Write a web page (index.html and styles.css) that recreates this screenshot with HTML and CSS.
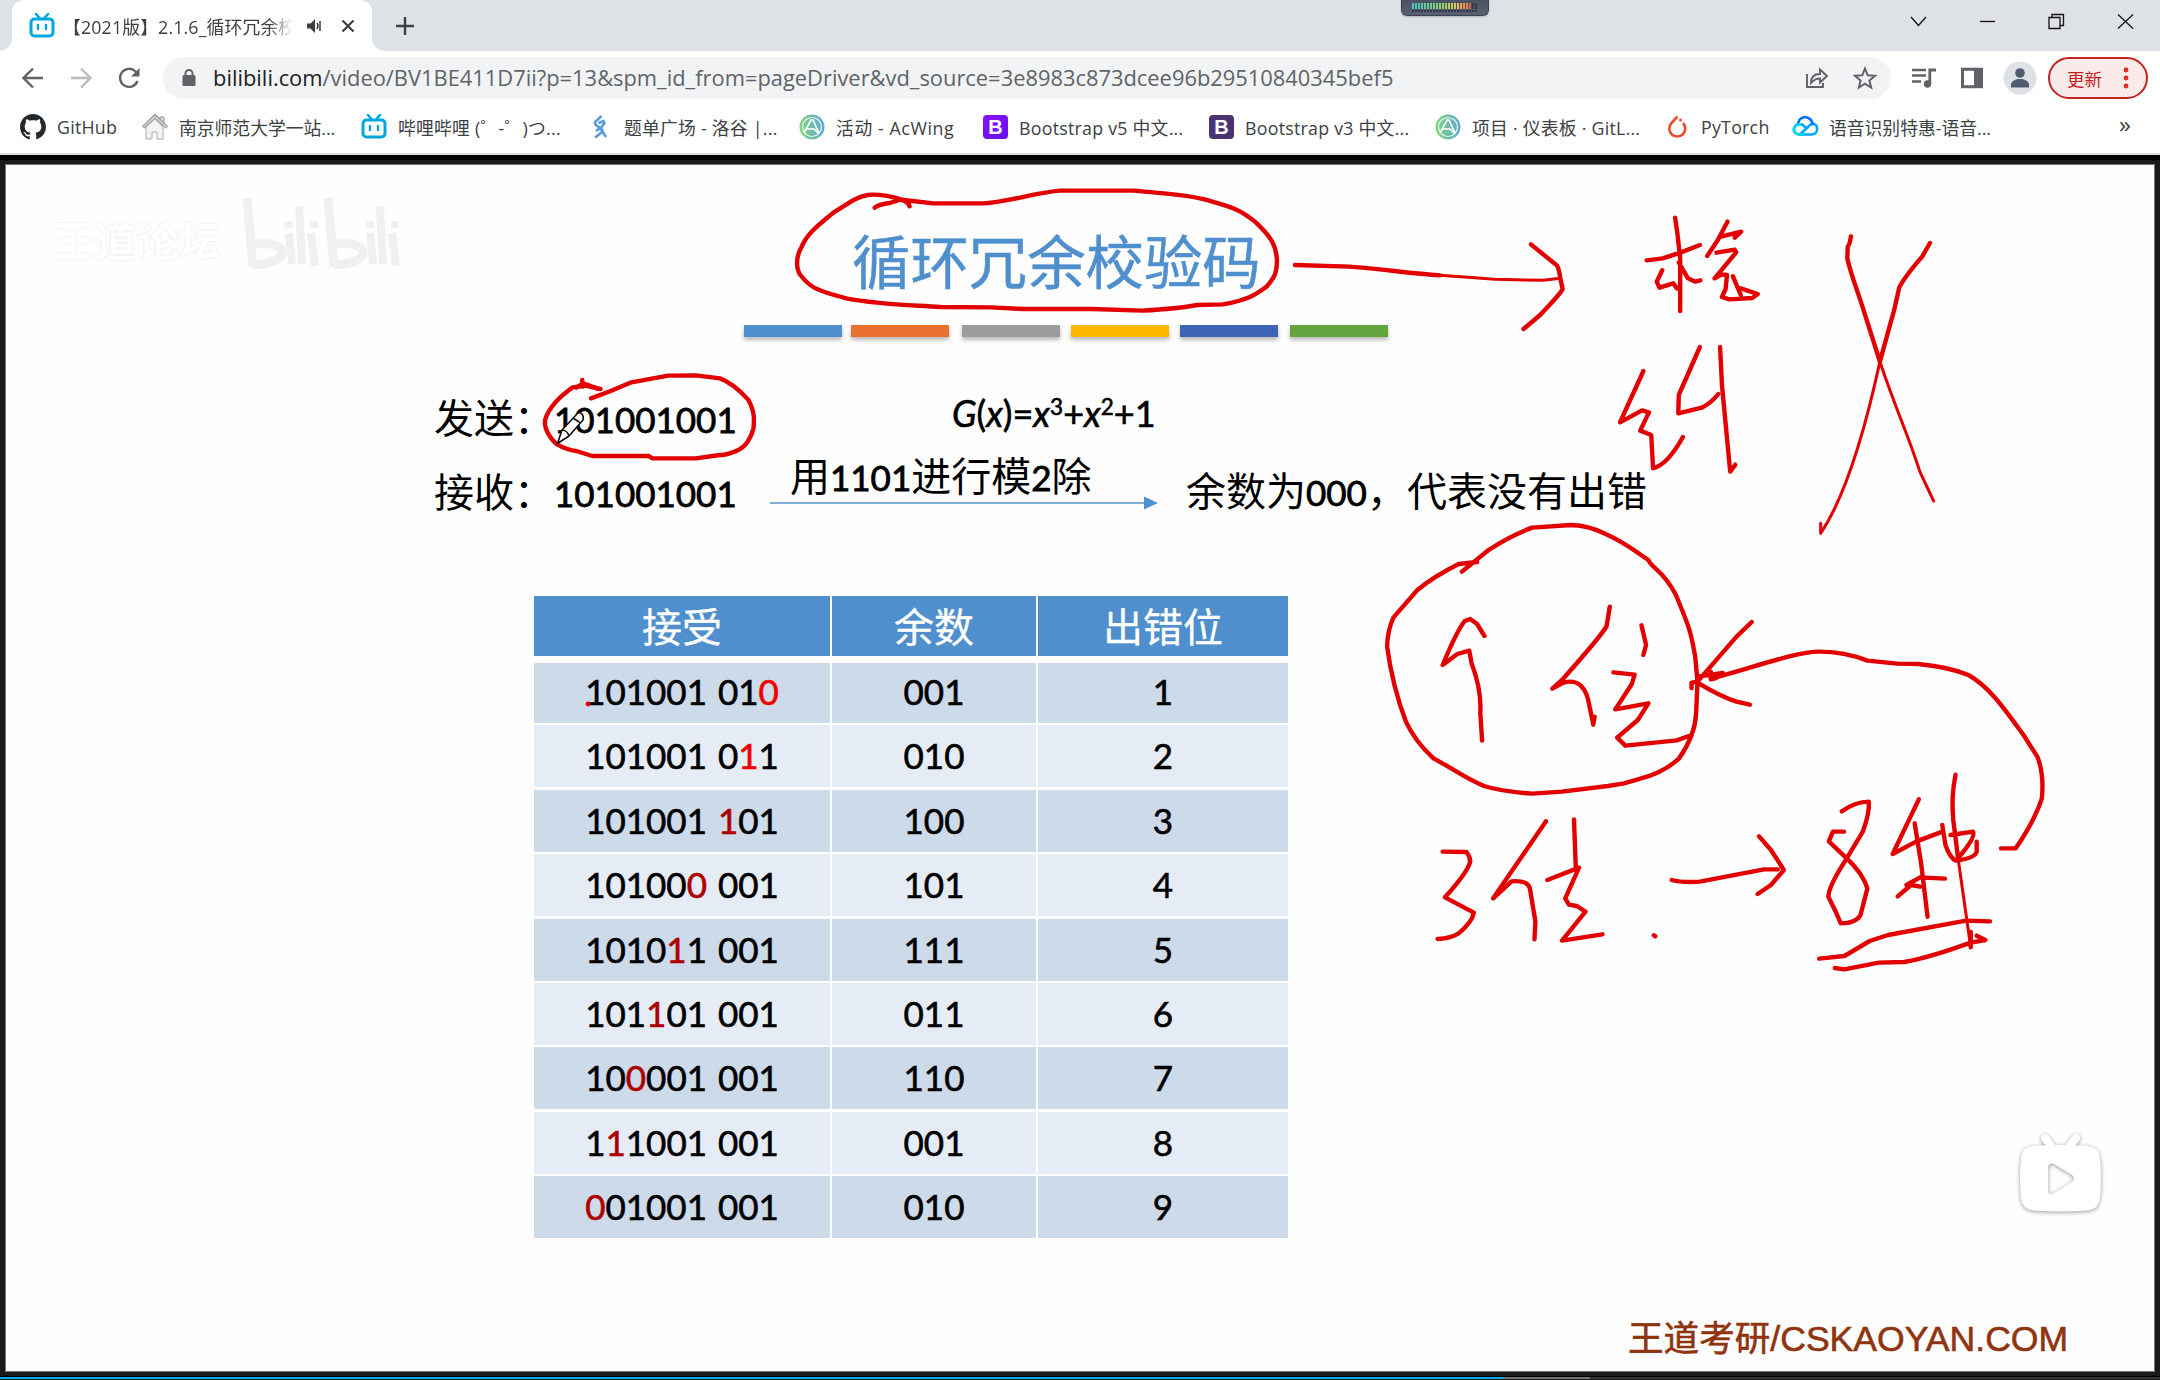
FILE: index.html
```html
<!DOCTYPE html>
<html lang="zh-CN">
<head>
<meta charset="utf-8">
<title>循环冗余校验码</title>
<link rel="stylesheet" href="styles.css">
</head>
<body>
<svg class="defs" width="0" height="0">
  <symbol id="bili" viewBox="0 0 26 26"><path d="M7 1l3.500 4M19 1l-3.500 4" stroke="#00a6de" stroke-width="2.600" stroke-linecap="round"/><rect x="2" y="6" width="22" height="17" rx="3.500" fill="#fff" stroke="#00a6de" stroke-width="3"/><path d="M9 12v4M17 12v4" stroke="#00a6de" stroke-width="2.400" stroke-linecap="round"/></symbol>
  <symbol id="acwing" viewBox="0 0 26 26"><defs><linearGradient id="ag"><stop offset="0" stop-color="#7fd67a"/><stop offset="1" stop-color="#62a6d8"/></linearGradient></defs><circle cx="13" cy="13" r="12.500" fill="url(#ag)"/><circle cx="13" cy="13" r="9.500" fill="none" stroke="#e6f6f0" stroke-width="1.200"/><path d="M5 19L12 6h2l6 13M8 15h7l4 4" fill="none" stroke="#fff" stroke-width="1.700"/></symbol>
</svg>

<header class="tabstrip">
  <div class="tab">
    <svg class="favicon" width="26" height="26"><use href="#bili"/></svg>
    <span class="tab-title">【2021版】2.1.6_循环冗余校</span>
    <svg class="sound" width="16" height="14" viewBox="0 0 16 14"><path d="M0 4.500h3.500L8 0v14L3.500 9.500H0z" fill="#3c4043"/><path d="M10 4q2 3 0 6M13 2v10" fill="none" stroke="#3c4043" stroke-width="1.500"/></svg>
    <svg class="tab-close" width="14" height="14" viewBox="0 0 14 14"><path d="M1.500 1.500l11 11M12.500 1.500l-11 11" stroke="#3c4043" stroke-width="2.200"/></svg>
  </div>
  <svg class="newtab" width="20" height="20" viewBox="0 0 20 20"><path d="M10 1v18M1 10h18" stroke="#3c4043" stroke-width="2.400"/></svg>
  <div class="meter"><i></i><b></b></div>
  <div class="winctl">
    <svg width="17" height="17" viewBox="0 0 17 17"><path d="M1 4l7.500 8.500L16 4"/></svg>
    <svg width="17" height="17" viewBox="0 0 17 17"><path d="M1 8.500h15"/></svg>
    <svg width="17" height="17" viewBox="0 0 17 17"><path d="M1 4.500h11v11H1zM4 4.500v-3h11.500v11H12.500"/></svg>
    <svg width="17" height="17" viewBox="0 0 17 17"><path d="M1 1.500l15 14M16 1.500L1 15.500"/></svg>
  </div>
</header>

<nav class="toolbar">
  <svg class="nav" width="24" height="24" viewBox="0 0 24 24"><path d="M22 12H3M12 2.500L2.500 12l9.500 9.500" stroke="#5f6368"/></svg>
  <svg class="nav" width="24" height="24" viewBox="0 0 24 24"><path d="M2 12h19M12 2.500l9.500 9.500-9.500 9.500" stroke="#babcbe"/></svg>
  <svg class="nav" width="24" height="24" viewBox="0 0 24 24"><path d="M20.500 15a9 9 0 1 1-2-9.500L21 8" stroke="#5f6368"/><path d="M22.500 2v8.500H14z" fill="#5f6368"/></svg>
  <div class="omnibox">
    <svg class="lock" width="14" height="18" viewBox="0 0 14 18"><rect x="0.500" y="6" width="13" height="11" rx="1.500" fill="#5f6368"/><path d="M3.500 7V4.500a3.500 3.500 0 0 1 7 0V7" fill="none" stroke="#5f6368" stroke-width="2"/></svg>
    <span class="url"><em>bilibili.com</em>/video/BV1BE411D7ii?p=13&amp;spm_id_from=pageDriver&amp;vd_source=3e8983c873dcee96b29510840345bef5</span>
    <svg class="share" width="24" height="24" viewBox="0 0 24 24"><path d="M2 8v13h16v-4M6 17c0-6 3-9 9-9V3.500l7 6.500-7 6.500V12.500c-4 0-6 1-9 4.500z" fill="none" stroke="#5f6368" stroke-width="1.900"/></svg>
    <svg class="star" width="24" height="24" viewBox="0 0 24 24"><path d="M12 2.500l2.700 6.800 7.300.5-5.600 4.700 1.800 7.100L12 17.700l-6.200 3.900 1.800-7.100L2 9.800l7.300-.5z" fill="none" stroke="#5f6368" stroke-width="2"/></svg>
  </div>
  <svg class="music" width="26" height="24" viewBox="0 0 26 24"><path d="M1 4h14M1 9.500h14M1 15.500h9" stroke="#5f6368" stroke-width="2.400"/><path d="M18.800 18V4H25" fill="none" stroke="#5f6368" stroke-width="2.800"/><circle cx="16.500" cy="18" r="3.700" fill="#5f6368"/></svg>
  <svg class="panel" width="22" height="22" viewBox="0 0 22 22"><path d="M1.500 2.200h19v17.600h-19z" fill="none" stroke="#5f6368" stroke-width="3"/><path d="M13 1h8v20h-8z" fill="#5f6368"/></svg>
  <svg class="avatar" width="34" height="34" viewBox="0 0 34 34"><circle cx="17" cy="17" r="16.500" fill="#dee1e6"/><circle cx="17" cy="12" r="4.800" fill="#525c70"/><path d="M8 26.500v-3c0-3.500 5-5.500 9-5.500s9 2 9 5.500v3z" fill="#525c70"/></svg>
  <button class="update">更新<svg width="6" height="24" viewBox="0 0 6 24"><circle cx="3" cy="4" r="2.400"/><circle cx="3" cy="12" r="2.400"/><circle cx="3" cy="20" r="2.400"/></svg></button>
</nav>

<nav class="bookmarks">
  <a class="bm w1"><svg width="26" height="26" viewBox="0 0 16 16"><path fill="#24292e" d="M8 0C3.580 0 0 3.580 0 8c0 3.540 2.290 6.530 5.470 7.590.4.070.55-.17.55-.38 0-.19-.01-.82-.01-1.490-2.010.37-2.530-.49-2.690-.94-.09-.23-.48-.94-.82-1.130-.28-.15-.68-.52-.01-.53.63-.01 1.080.58 1.230.82.720 1.210 1.870.87 2.330.66.070-.52.280-.87.510-1.070-1.780-.2-3.640-.89-3.640-3.950 0-.87.310-1.590.82-2.150-.08-.2-.36-1.020.08-2.120 0 0 .67-.21 2.200.82.640-.18 1.320-.27 2-.27s1.360.09 2 .27c1.530-1.040 2.200-.82 2.200-.82.440 1.100.16 1.920.08 2.120.51.560.82 1.270.82 2.150 0 3.070-1.870 3.750-3.650 3.950.29.25.54.73.54 1.480 0 1.070-.01 1.930-.01 2.200 0 .21.15.46.55.38A8.010 8.010 0 0 0 16 8c0-4.420-3.580-8-8-8z"/></svg><span>GitHub</span></a>
  <a class="bm w2"><svg width="26" height="26" viewBox="0 0 26 26"><path d="M18 3h4v7h-4z" fill="#ddd" stroke="#999"/><path d="M4 13v12h6v-7h5v7h6V13l-8-8z" fill="#f3f3f3" stroke="#aaa"/><path d="M1 13.500L13 2l12 11.500" fill="none" stroke="#999" stroke-width="3.500"/><path d="M1.500 13L13 2.500 24.500 13" fill="none" stroke="#d6d6d6" stroke-width="1.600"/></svg><span>南京师范大学一站...</span></a>
  <a class="bm w3"><svg width="26" height="26"><use href="#bili"/></svg><span>哔哩哔哩 (゜-゜)つ...</span></a>
  <a class="bm w4"><svg width="26" height="26" viewBox="0 0 26 26"><path d="M14.500 2L8.500 7.500q-1.500 2 1 4l5 3.500q2 1.500 0 3.500l-6.500 5M11.500 9l5-2 1 2-3 4-5.500 4M13 14l6 9" fill="none" stroke="#559be0" stroke-width="2.500"/></svg><span>题单广场 - 洛谷 |...</span></a>
  <a class="bm w5"><svg width="26" height="26"><use href="#acwing"/></svg><span>活动 - AcWing</span></a>
  <a class="bm w6"><i class="boot five">B</i><span>Bootstrap v5 中文...</span></a>
  <a class="bm w7"><i class="boot three">B</i><span>Bootstrap v3 中文...</span></a>
  <a class="bm w8"><svg width="26" height="26"><use href="#acwing"/></svg><span>项目 · 仪表板 · GitL...</span></a>
  <a class="bm w9"><svg width="26" height="26" viewBox="0 0 26 26"><path d="M13.500 2.500L7.500 9a8 8 0 1 0 11.500 0" fill="none" stroke="#ee4c2c" stroke-width="2.600"/><circle cx="16.500" cy="6" r="1.500" fill="#ee4c2c"/></svg><span>PyTorch</span></a>
  <a class="bm w10"><svg width="26" height="26" viewBox="0 0 26 26"><path d="M8 20.500L18 11q5-3 7 2 1 7-5 7.500H7q-6-1-5-6 2-6 8-4l5 4" fill="none" stroke="#00a3ff" stroke-width="2.600"/><path d="M6 11q0-7 7-8 7 1 8 8" fill="none" stroke="#006eff" stroke-width="2.600"/><path d="M12 20.500H7q-6-1-5-6 2-5 7-4" fill="none" stroke="#00d8e8" stroke-width="2.600"/></svg><span>语音识别特惠-语音...</span></a>
  <span class="more">»</span>
</nav>

<main class="player">
  <section class="slide">
    <h1>循环冗余校验码</h1>
    <div class="stripes"><i></i><i></i><i></i><i></i><i></i><i></i></div>
    <div class="problem">
      <div class="given"><p>发送：<span class="num">101001001</span></p><p>接收：<span class="num">101001001</span></p></div>
      <div class="method">
        <p class="poly"><em>G</em>(<em>x</em>)=<em>x</em><sup>3</sup>+<em>x</em><sup>2</sup>+1</p>
        <p class="mod">用<span class="num">1101</span>进行模<span class="num">2</span>除</p>
        <svg class="arrow" width="388" height="14" viewBox="0 0 388 14"><path d="M0 7h376" stroke="#5593cd" stroke-width="1.600"/><path d="M374 0.500L388 7l-14 6.500z" fill="#4f8fcd"/></svg>
      </div>
      <p class="result">余数为<span class="num">000</span>，代表没有出错</p>
    </div>
    <div class="table">
      <div class="row head"><span>接受</span><span>余数</span><span>出错位</span></div>
      <div class="row first"><span>101001 01<b class="hot">0</b></span><span>001</span><span>1</span></div>
      <div class="row"><span>101001 0<b class="hot">1</b>1</span><span>010</span><span>2</span></div>
      <div class="row"><span>101001 <b>1</b>01</span><span>100</span><span>3</span></div>
      <div class="row"><span>10100<b>0</b> 001</span><span>101</span><span>4</span></div>
      <div class="row"><span>1010<b>1</b>1 001</span><span>111</span><span>5</span></div>
      <div class="row"><span>101<b>1</b>01 001</span><span>011</span><span>6</span></div>
      <div class="row"><span>10<b>0</b>001 001</span><span>110</span><span>7</span></div>
      <div class="row"><span>1<b>1</b>1001 001</span><span>001</span><span>8</span></div>
      <div class="row"><span><b>0</b>01001 001</span><span>010</span><span>9</span></div>
    </div>
    <footer class="brand">王道考研/CSKAOYAN.COM</footer>
  </section>
  <div class="progress"></div>
</main>

<div class="watermark">
  <span>王道论坛</span>
  <svg width="160" height="74" viewBox="0 0 160 74"><g id="bl" fill="none" stroke="#f0f0f0" stroke-width="8"><path d="M5 1L11 70M11 47Q40 44 40 57Q38 66 11 68" stroke-width="9"/><path d="M47 36l3 31M57 9l3 58M69 36l4 33M46 24l1 7M72 24l0 7"/></g><use href="#bl" x="81"/></svg>
</div>

<svg class="ink" width="2160" height="1380" viewBox="0 0 2160 1380">
  <g transform="translate(720 165) scale(.45918 .33333)">
    <path d="M337 128Q345 118 370 114L392 104Q408 108 413 124M400 105Q350 85 322 90C300 95 290 105 245 145C215 180 190 205 178 245C165 275 165 310 175 330C195 365 205 375 275 400C350 420 420 420 480 426L590 427L660 432L810 432L920 437C980 432 1000 430 1040 420L1095 418C1150 405 1165 390 1190 365C1210 335 1212 320 1213 290C1212 240 1200 215 1165 170C1130 130 1110 125 1055 103C1000 85 960 85 900 77L740 77C680 85 630 110 575 115L465 115L400 105"/>
    <path d="M1252 300L1370 305C1450 313 1500 325 1568 331"/>
  </g>
  <g transform="translate(0 165) scale(.45918 .33333)">
    <path d="M1287 700L1330 678L1375 652L1455 632L1515 631L1568 640C1598 655 1620 690 1630 705C1643 740 1643 760 1641 790C1636 820 1623 845 1608 855C1593 865 1578 870 1568 870L1515 880L1420 880L1413 873L1290 873L1255 858Q1235 855 1213 838C1190 810 1185 780 1187 765C1195 725 1220 695 1247 667L1275 662L1308 672M1268 645L1268 665"/>
    <path d="M1255 668L1270 655L1300 670"/>
  </g>
  <g transform="translate(1440 165) scale(.45918 .33333)">
    <path class="thin" d="M0 331L120 343L225 346L262 340"/>
    <path d="M198 238L255 302Q260 315 262 340L267 372Q265 380 245 410L218 450L182 492"/>
    <path d="M512 158L517 205L523 280V438M450 286L485 280L525 262L566 240M484 316L472 350L478 368L508 355L516 370M520 292L540 340L556 350L567 346M626 170L605 225L582 273M612 215L656 200L642 218M602 263L642 254L645 262L598 340L614 328L625 330L622 372L614 396L630 403L680 399L692 387L655 370M638 334L655 390"/>
    <path d="M443 618L392 772L440 736L455 742L436 797L460 810L464 910Q495 900 529 816M566 546L520 690L519 745L570 728Q590 715 606 687M610 546L614 660L632 920L643 899"/>
    <path d="M895 214Q892 240 888 245L887 280C895 330 905 360 920 425L958 590M1067 234L1050 275Q1012 335 1000 368L990 430L958 590"/>
    <path class="thin" d="M958 590C1000 760 1020 810 1045 920L1075 1008M958 590C925 800 880 1000 829 1105L829 1075"/>
  </g>
  <g transform="translate(1360 500) scale(.45918 .33333)">
    <path d="M222 215L280 150Q330 105 375 83L460 75Q500 77 535 102C580 130 590 145 628 180C635 205 660 210 688 285C715 375 720 390 730 470L735 545L732 640Q730 705 695 775Q660 820 605 838L575 850L540 858L440 875L375 881Q310 875 270 858C230 835 220 820 160 775Q120 725 100 665C75 575 65 500 59 440Q60 390 73 352L125 270Q160 230 215 192L255 186"/>
    <path d="M271 408L255 372L240 357L228 363Q210 395 180 495L212 462L238 452L243 490Q265 570 262 640L266 722M544 320L537 378Q530 400 440 540L419 566L443 548Q490 530 500 620L508 674L511 650M613 376L623 435L617 465M552 517L598 524L592 552L556 628L628 610L605 660L560 713L578 737L690 721L716 708"/>
    <path d="M853 366L820 410L735 545L722 548V564M849 614L820 605Q785 590 735 548M735 530L790 519Q780 535 764 538V515M785 528C850 505 950 455 1000 455Q1055 455 1105 482L1170 491L1215 492Q1280 500 1325 525C1370 560 1400 620 1445 705L1475 770Q1490 820 1485 895Q1470 960 1428 1045H1396"/>
    <path d="M180 1055L232 1056Q240 1070 240 1085Q235 1115 185 1192L248 1238Q245 1265 215 1300Q200 1315 169 1317M405 964L290 1195L330 1144Q365 1140 370 1165L382 1265L380 1318M466 958L470 1105M408 1140L477 1103L447 1195L455 1214L472 1218L491 1235L440 1322L528 1303M640 1306L643 1309"/>
    <path d="M679 1140Q700 1148 740 1145L880 1108H910M869 1009L895 1050L923 1110L895 1155L866 1182"/>
    <path d="M1049 934Q1080 905 1108 905Q1110 940 1095 995L1060 1075Q1020 1160 1020 1190L1035 1232L1047 1270Q1080 1270 1090 1245L1105 1165Q1095 1120 1060 1075L1021 1024L1030 995H1054"/>
    <path d="M1217 898L1160 1062L1212 1024L1270 994M1208 970L1222 1090L1236 1250M1171 1189L1200 1155L1220 1160M1190 1155L1220 1132L1274 1136M1268 975L1275 1035Q1285 1075 1298 1082Q1340 1075 1343 1055V1025M1286 1005L1335 995Q1342 1010 1304 1072M1297 824Q1287 890 1292 960L1303 1080"/>
    <path class="thin" d="M1303 1080L1330 1342"/>
    <path d="M1000 1376L1055 1368L1110 1323L1150 1305L1320 1262L1372 1264M1034 1404L1055 1408L1130 1388L1185 1386Q1235 1375 1330 1328L1362 1320L1343 1307M1330 1296V1342"/>
  </g>
  <circle class="dot" cx="588" cy="704" r="2.400" />
  <path class="pen" d="M557.500 443.500l4.500-13.500 15-16q3-2.500 5 0t1 6l-14 16zM573 418l6 4M562 430q5 0 7 6"/>
</svg>

<svg class="float" width="110" height="110" viewBox="0 0 110 110"><path d="M40 18l9 12M71 18l-9 12" stroke="#fff" stroke-width="8" stroke-linecap="round"/><path d="M28 26Q55.500 24 83 26Q94 27 95 38Q97 58 95 78Q94 89 83 90.500Q55.500 92.500 28 90.500Q17 89 16 78Q14 58 16 38Q17 27 28 26zM43 49V69Q43 76 49 73L67 62Q71 59 67 55L49 44Q43 42 43 49z" fill="#fff" fill-rule="evenodd"/></svg>
</body>
</html>
```
FILE: styles.css
```css
* { box-sizing: border-box; }
body {
  margin: 0;
  width: 2160px;
  height: 1380px;
  overflow: hidden;
  display: flex;
  flex-direction: column;
  background: #fff;
  font-family: "Open Sans", "Noto Sans CJK SC", sans-serif;
  color: #3c4043;
}
svg { display: block; flex: none; overflow: visible; }
p, h1 { margin: 0; font-weight: 400; }
em, i { font-style: normal; }
.defs { position: absolute; }

/* window frame and tabs */
.tabstrip { height: 51px; background: #dee1e6; display: flex; align-items: flex-start; }
.tab {
  width: 360px; height: 51px; margin-left: 12px; padding: 0 17px;
  display: flex; align-items: center;
  background: #fff; border-radius: 12px 12px 0 0; position: relative;
}
.tab::before, .tab::after {
  content: ""; position: absolute; bottom: 0; width: 12px; height: 12px;
}
.tab::before { left: -12px; background: radial-gradient(circle at 0 0, transparent 11.5px, #fff 12px); }
.tab::after { right: -12px; background: radial-gradient(circle at 100% 0, transparent 11.5px, #fff 12px); }
.tab-title {
  width: 232px; margin-left: 8px; overflow: hidden; white-space: nowrap;
  font-size: 17.8px; letter-spacing: 0.15px;
  -webkit-mask-image: linear-gradient(90deg, #000 205px, transparent 230px);
}
.sound { margin-left: 13px; }
.tab-close { margin-left: 18px; }
.newtab { margin: 16px 0 0 23px; }
.meter {
  width: 88px; height: 16px; margin-left: 986px; padding: 3px 10px;
  background: linear-gradient(#4b5262, #5a6072); border: 1px solid #3b4150; border-top: 0;
  border-radius: 0 0 6px 6px; box-shadow: 0 1px 2px #8888;
}
.meter i, .meter b { display: block; height: 6px; }
.meter i {
  background: repeating-linear-gradient(90deg, transparent 0 2px, #4b5262 2px 3px), linear-gradient(90deg, #3fc6c6, #8fd56a 45%, #e8c34c 70%, #ef6a4a 88%, #3a3f4c 90%);
}
.meter b { height: 2px; margin-top: 1px; background: repeating-linear-gradient(90deg, #343946 0 2px, transparent 2px 3px); }
.winctl { display: flex; gap: 52px; margin: 13px 0 0 421px; }
.winctl path { fill: none; stroke: #111; stroke-width: 1.3; }

/* address row */
.toolbar { height: 54px; padding: 0 12px 0 21px; display: flex; align-items: center; }
.nav { margin-right: 24px; }
.nav path:first-child { fill: none; stroke-width: 2.4; }
.omnibox {
  width: 1729px; height: 42px; border-radius: 21px; background: #f1f3f4;
  margin-left: -2px; padding-left: 19px; display: flex; align-items: center;
}
.url { margin-left: 17px; width: 1591px; font-size: 21.88px; white-space: nowrap; color: #5f6368; line-height: 40px; }
.url em { color: #202124; }
.share { margin-left: 1px; }
.star { margin-left: 24px; }
.music { margin-left: 20px; }
.panel { margin-left: 24px; }
.avatar { margin-left: 20px; }
.update {
  width: 100px; height: 42px; margin-left: 11px; padding: 0 17px; border: 2px solid #c5221f; border-radius: 21px;
  background: #faebeb; color: #c5221f; display: flex; align-items: center; justify-content: space-between;
  font: 17.5px "Noto Sans CJK SC", sans-serif;
}
.update circle { fill: #d93025; }

/* bookmark row */
.bookmarks { height: 48px; padding: 0 0 5px 20px; display: flex; align-items: center; font-size: 17.8px; letter-spacing: 0.25px; }
.bm { display: flex; align-items: center; gap: 11px; white-space: nowrap; flex: none; }
.w1 { width: 122px; } .w2 { width: 219px; } .w3 { width: 226px; } .w4 { width: 212px; } .w5 { width: 184px; letter-spacing: 0.6px; }
.w6 { width: 226px; } .w7 { width: 226px; } .w8 { width: 229px; } .w9 { width: 128px; } .w10 { width: 327px; }
.w2, .w10 { letter-spacing: 0; }
.boot {
  width: 25px; height: 24px; border-radius: 4px; color: #fff; text-align: center;
  font: bold 20px/24px "Liberation Sans", sans-serif;
}
.five { background: linear-gradient(135deg, #8a12ff, #6610f2); }
.three { background: #4b3270; }
.more { font-size: 24px; line-height: 20px; margin-top: -5px; }

/* video area */
.player { height: 1227px; background: #1a1a1a; border-top: 2px solid #d9dcda; box-shadow: inset 0 5px #000; padding: 10px 6px 0 6px; }
.slide {
  height: 1206px; background: #fefefe; outline: 1px solid #777; display: flex; flex-direction: column;
  font-family: Lato, "Noto Sans CJK SC", sans-serif; color: #000;
}
.progress { height: 3px; margin: 5px -6px 0; border-top: 1px solid #000; background: linear-gradient(90deg, #00aeec 1503px, #757575 1503px 1590px, #333 1590px); }
.slide h1 { margin: 61px 0 0 846px; font-size: 58.4px; line-height: 70px; color: #4f8fcd; -webkit-text-stroke: 0.5px #4f8fcd; }
.stripes { display: flex; margin: 29px 0 0 738px; }
.stripes i { width: 98px; height: 12px; box-shadow: 0 3px 4px #8889; }
.stripes i:nth-child(1) { background: #4f8fcd; margin-right: 9px; }
.stripes i:nth-child(2) { background: #e97130; margin-right: 13px; }
.stripes i:nth-child(3) { background: #9c9c9c; margin-right: 11px; }
.stripes i:nth-child(4) { background: #fdb900; margin-right: 11px; }
.stripes i:nth-child(5) { background: #3c65b8; margin-right: 12px; }
.stripes i:nth-child(6) { background: #64a43f; }
.problem { height: 259px; display: flex; font-size: 40px; white-space: nowrap; }
.num { font-size: 35px; -webkit-text-stroke: 0.8px #000; }
.given { width: 336px; margin-left: 428px; padding-top: 45px; }
.given p { line-height: 73px; }
.method { width: 388px; padding-top: 46px; }
.poly { padding-left: 182px; line-height: 60px; font-size: 36px; -webkit-text-stroke: 0.6px #000; }
.poly em { font-style: italic; }
.poly sup { font-size: 22.5px; line-height: 0; vertical-align: 12px; }
.mod { padding-left: 20px; line-height: 60px; margin-top: 3px; }
.arrow { margin-top: -11px; }
.result { margin: 118px 0 0 28px; line-height: 73px; height: 73px; }

.table { margin-left: 528px; width: 755px; font-size: 35px; word-spacing: 2px; }
.row { display: grid; grid-template-columns: 296px 204px 250px; gap: 2px; height: 62px; margin-bottom: 2.4px; }
.row span {
  background: #cddaea; display: flex; align-items: center; justify-content: center; white-space: pre;
  padding-bottom: 2px; -webkit-text-stroke: 0.6px;
}
.row:nth-child(odd) span { background: #e6ecf6; }
.row.head { height: 60px; margin-bottom: 7px; font-size: 40px; }
.row.head span { background: #4f8fcd; color: #fff; -webkit-text-stroke: 0.3px; }
.row.first { height: 60px; }
.row.first span { padding-bottom: 4px; }
.row b { font-weight: 400; color: #ad0000; }
.row b.hot { color: #f00000; }
.brand {
  margin: 66px 0 0 1622px; font: 35.6px/64px "Liberation Sans", "Noto Sans CJK SC", sans-serif;
  color: #90330f; white-space: nowrap; -webkit-text-stroke: 0.6px #90330f;
}

/* layers above the slide */
.watermark { position: absolute; left: 52px; top: 197px; display: flex; align-items: center; gap: 20px; }
.watermark span { font: bold 42.5px/60px "Noto Sans CJK SC", sans-serif; color: #fff; text-shadow: 0 0 2px #ddd; width: 170px; padding-top: 10px; }
.ink { position: absolute; left: 0; top: 0; }
.ink path {
  fill: none; stroke: #e30000; stroke-width: 4.4px; stroke-linecap: round; stroke-linejoin: round;
  vector-effect: non-scaling-stroke;
}
.ink .thin { stroke-width: 3px; }
.ink .dot { fill: #e30000; }
.ink .pen { fill: #fff; stroke: #111; stroke-width: 1.6px; }
.float { position: absolute; left: 2005px; top: 1120px; filter: drop-shadow(0 1px 2px #0006); }
```
